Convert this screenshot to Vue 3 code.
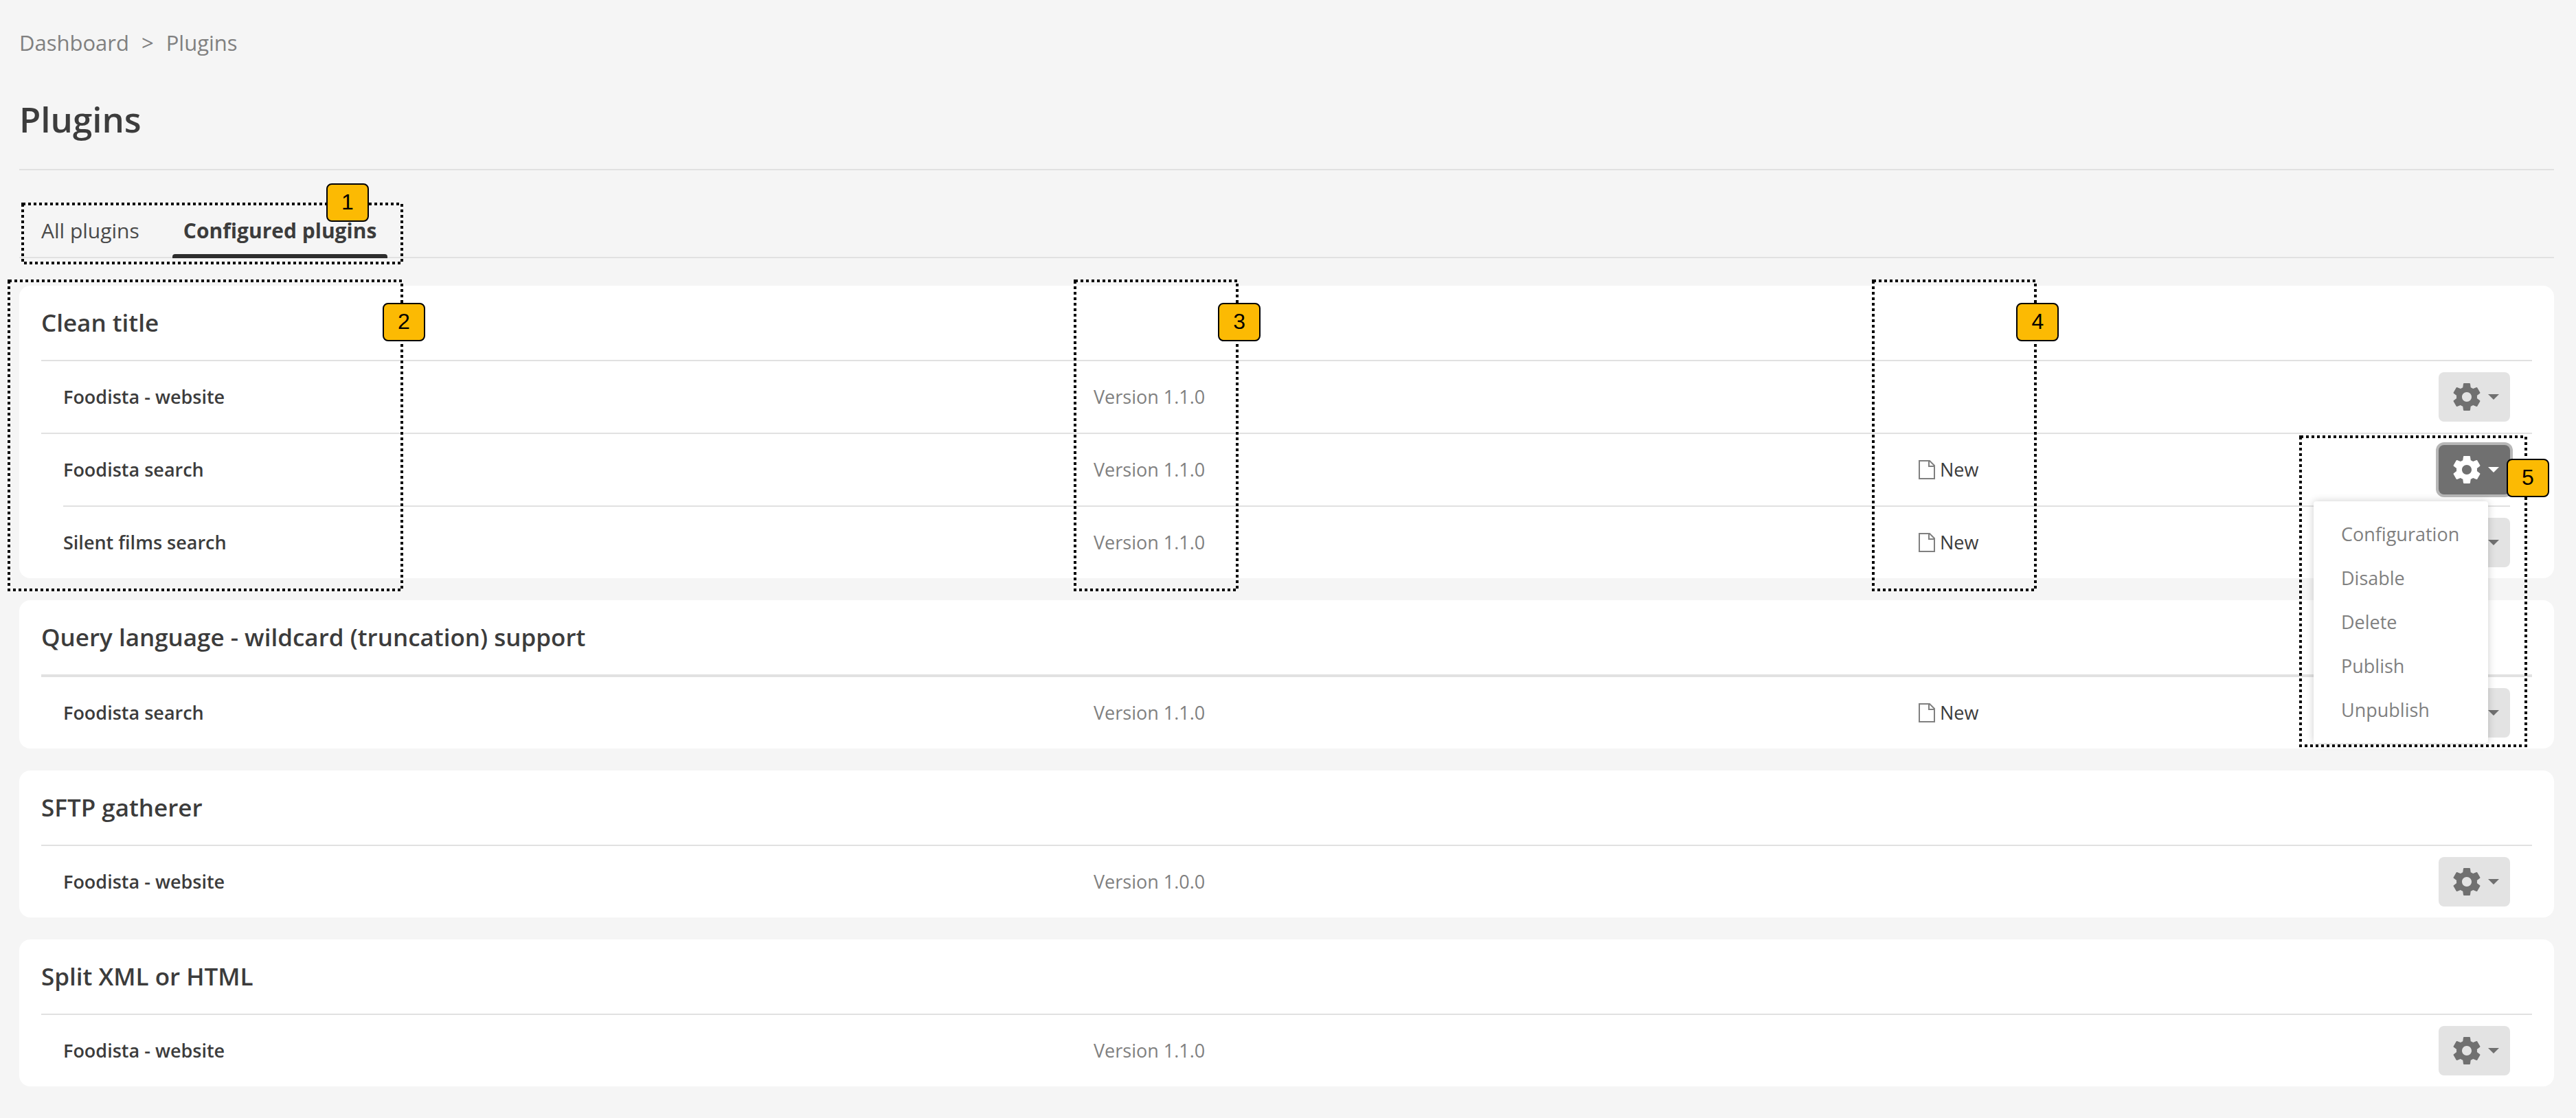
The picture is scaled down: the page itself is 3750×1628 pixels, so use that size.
<script setup>
import { ref } from 'vue'

const tabs = ['All plugins', 'Configured plugins']
const activeTab = ref('Configured plugins')

const menuItems = ['Configuration', 'Disable', 'Delete', 'Publish', 'Unpublish']

const plugins = [
  {
    name: 'Clean title',
    annotated: true,
    groups: [
      [{ id: 1, name: 'Foodista - website', version: 'Version 1.1.0', status: '' }],
      [
        { id: 2, name: 'Foodista search', version: 'Version 1.1.0', status: 'New' },
        { id: 3, name: 'Silent films search', version: 'Version 1.1.0', status: 'New' },
      ],
    ],
  },
  {
    name: 'Query language - wildcard (truncation) support',
    thick: true,
    groups: [[{ id: 4, name: 'Foodista search', version: 'Version 1.1.0', status: 'New' }]],
  },
  {
    name: 'SFTP gatherer',
    groups: [[{ id: 5, name: 'Foodista - website', version: 'Version 1.0.0', status: '' }]],
  },
  {
    name: 'Split XML or HTML',
    groups: [[{ id: 6, name: 'Foodista - website', version: 'Version 1.1.0', status: '' }]],
  },
]

const openMenu = ref(2)

const toggleMenu = (id) => {
  openMenu.value = openMenu.value === id ? null : id
}
</script>

<template>
  <main class="page">
    <nav class="breadcrumb" aria-label="Breadcrumb">
      <a href="#">Dashboard</a>
      <span>&gt;</span>
      <a href="#">Plugins</a>
    </nav>

    <h1 class="page-title">Plugins</h1>

    <div class="tabs">
      <button
        v-for="tab in tabs"
        :key="tab"
        type="button"
        class="tab"
        :class="{ active: activeTab === tab }"
        @click="activeTab = tab"
      >
        {{ tab }}
      </button>
      <div class="callout callout-tabs">
        <svg class="outline"><rect x="2" y="2" /></svg>
        <span class="badge">1</span>
      </div>
    </div>

    <section v-for="plugin in plugins" :key="plugin.name" class="card">
      <h2 class="card-title">{{ plugin.name }}</h2>
      <ul
        v-for="(group, index) in plugin.groups"
        :key="index"
        class="group"
        :class="{ thick: plugin.thick }"
      >
        <li v-for="item in group" :key="item.id" class="row">
          <span class="name">{{ item.name }}</span>
          <span class="version">{{ item.version }}</span>
          <span class="status">
            <template v-if="item.status">
              <svg class="file-icon" viewBox="0 0 26 28">
                <path d="M2 1h15l7 7v19H2zM16 1v8h8" />
              </svg>
              {{ item.status }}
            </template>
          </span>
          <div class="actions">
            <button
              type="button"
              class="gear-button"
              :class="{ open: openMenu === item.id }"
              aria-label="Actions"
              @click="toggleMenu(item.id)"
            >
              <svg class="gear-icon" viewBox="2 2 20 20">
                <path
                  d="M19.43 12.98c.04-.32.07-.64.07-.98s-.03-.66-.07-.98l2.11-1.65c.19-.15.24-.42.12-.64l-2-3.46c-.12-.22-.39-.3-.61-.22l-2.49 1c-.52-.4-1.08-.73-1.69-.98l-.38-2.65C14.46 2.18 14.25 2 14 2h-4c-.25 0-.46.18-.49.42l-.38 2.65c-.61.25-1.17.59-1.69.98l-2.49-1c-.23-.09-.49 0-.61.22l-2 3.46c-.13.22-.07.49.12.64l2.11 1.65c-.04.32-.07.65-.07.98s.03.66.07.98l-2.11 1.65c-.19.15-.24.42-.12.64l2 3.46c.12.22.39.3.61.22l2.49-1c.52.4 1.08.73 1.69.98l.38 2.65c.03.24.24.42.49.42h4c.25 0 .46-.18.49-.42l.38-2.65c.61-.25 1.17-.59 1.69-.98l2.49 1c.23.09.49 0 .61-.22l2-3.46c.12-.22.07-.49-.12-.64l-2.11-1.65zM12 15.5c-1.93 0-3.5-1.57-3.5-3.5s1.57-3.5 3.5-3.5 3.5 1.57 3.5 3.5-1.57 3.5-3.5 3.5z"
                />
              </svg>
              <span class="caret"></span>
            </button>
            <template v-if="openMenu === item.id">
              <div class="menu">
                <a v-for="entry in menuItems" :key="entry" href="#" class="menu-item">{{ entry }}</a>
              </div>
              <div class="callout callout-menu">
                <svg class="outline"><rect x="2" y="2" /></svg>
                <span class="badge">5</span>
              </div>
            </template>
          </div>
        </li>
      </ul>
      <template v-if="plugin.annotated">
        <div class="callout callout-name">
          <svg class="outline"><rect x="2" y="2" /></svg>
          <span class="badge">2</span>
        </div>
        <div class="callout callout-version">
          <svg class="outline"><rect x="2" y="2" /></svg>
          <span class="badge">3</span>
        </div>
        <div class="callout callout-status">
          <svg class="outline"><rect x="2" y="2" /></svg>
          <span class="badge">4</span>
        </div>
      </template>
    </section>
  </main>
</template>

<style>
html {
  background: #f5f5f5;
}
</style>

<style scoped>
.page {
  padding: 40px 32px 16px 28px;
  font-family: 'Open Sans', sans-serif;
  font-size: 27px;
  line-height: 40px;
  color: #3c3c3c;
}

.breadcrumb {
  display: flex;
  gap: 18px;
  font-size: 31px;
  line-height: 44px;
  color: #808080;
}

.breadcrumb a {
  color: inherit;
  text-decoration: none;
}

.page-title {
  margin: 0 0 48px;
  padding: 54px 0 38px;
  border-bottom: 2px solid #e1e1e1;
  font-size: 51px;
  line-height: 70px;
  font-weight: 600;
}

.tabs {
  position: relative;
  display: flex;
  gap: 32px;
  margin-bottom: 40px;
  padding-left: 16px;
  border-bottom: 2px solid #e1e1e1;
}

.tab {
  position: relative;
  padding: 18px 16px 16px;
  border: none;
  background: none;
  font-family: inherit;
  font-size: 30px;
  line-height: 44px;
  color: #4a4a4a;
  cursor: pointer;
}

.tab.active {
  font-weight: 700;
  color: #3c3c3c;
}

.tab.active::after {
  content: '';
  position: absolute;
  left: 0;
  right: 0;
  bottom: -2px;
  height: 6px;
  border-radius: 4px 4px 0 0;
  background: #2d2d2d;
}

.card {
  position: relative;
  margin-bottom: 32px;
  padding: 0 32px;
  border-radius: 16px;
  background: #fff;
}

.card-title {
  margin: 0;
  padding: 28px 0;
  font-size: 35px;
  line-height: 52px;
  font-weight: 600;
}

.group {
  margin: 0;
  padding: 0 32px;
  border-top: 2px solid #e1e1e1;
  list-style: none;
}

.group.thick {
  border-top-width: 4px;
}

.row {
  display: grid;
  grid-template-columns: 1500fr 1200fr 758fr 104px;
  align-items: center;
  height: 104px;
}

.row + .row {
  border-top: 2px solid #e1e1e1;
}

.name {
  font-weight: 600;
}

.version {
  color: #808080;
}

.status {
  display: flex;
  align-items: center;
  gap: 6px;
}

.file-icon {
  width: 26px;
  height: 28px;
  fill: none;
  stroke: #808080;
  stroke-width: 2;
}

.actions {
  position: relative;
}

.gear-button {
  display: flex;
  align-items: center;
  gap: 11px;
  width: 104px;
  height: 72px;
  padding: 0 16px 0 21px;
  border: none;
  border-radius: 8px;
  background: #e3e3e3;
  color: #707070;
  cursor: pointer;
}

.gear-button.open {
  background: #707070;
  color: #fff;
  box-shadow: 0 0 0 4px #b7b7b7;
}

.gear-icon {
  flex: none;
  width: 40px;
  height: 40px;
  fill: currentColor;
}

.caret {
  border-top: 8px solid currentColor;
  border-left: 8px solid transparent;
  border-right: 8px solid transparent;
}

.menu {
  position: absolute;
  top: 82px;
  right: 32px;
  z-index: 1;
  box-sizing: border-box;
  width: 254px;
  padding: 16px 0;
  border-radius: 4px;
  background: #fff;
  box-shadow: 0 0 12px rgba(0, 0, 0, 0.2);
}

.menu-item {
  display: block;
  padding: 12px 40px;
  color: #808080;
  text-decoration: none;
}

.callout {
  position: absolute;
  z-index: 2;
  pointer-events: none;
}

.outline {
  display: block;
  width: 100%;
  height: 100%;
}

.outline rect {
  width: calc(100% - 4px);
  height: calc(100% - 4px);
  fill: none;
  stroke: #000;
  stroke-width: 4;
  stroke-dasharray: 4 4;
}

.badge {
  position: absolute;
  top: 34px;
  right: -32px;
  box-sizing: border-box;
  width: 62px;
  height: 56px;
  border: 2px solid #000;
  border-radius: 8px;
  background: #fcba03;
  font-family: 'Liberation Sans', Arial, sans-serif;
  font-size: 32px;
  line-height: 50px;
  text-align: center;
  color: #000;
}

.callout-tabs {
  top: -1px;
  left: 3px;
  width: 556px;
  height: 90px;
}

.callout-tabs .badge {
  top: -28px;
  right: 50px;
}

.callout-name,
.callout-version,
.callout-status {
  top: -9px;
  bottom: -19px;
  width: 240px;
}

.callout-name {
  left: -17px;
  width: 576px;
}

.callout-version {
  left: 41.6%;
}

.callout-status {
  left: 73.1%;
}

.callout-menu {
  top: -14px;
  right: -25px;
  width: 332px;
  height: 454px;
}
</style>
